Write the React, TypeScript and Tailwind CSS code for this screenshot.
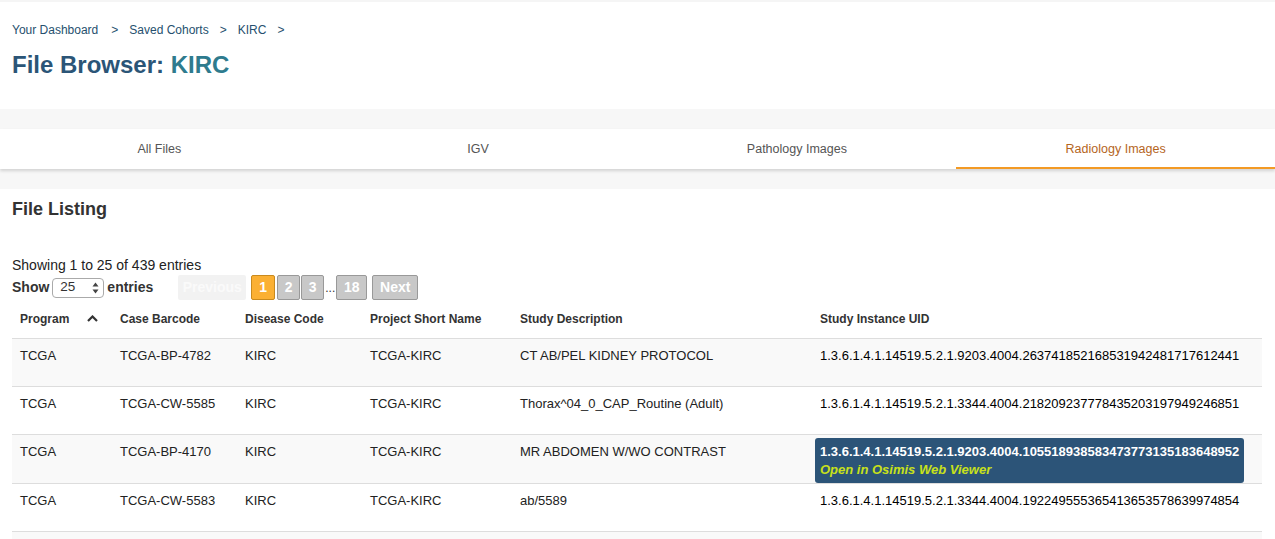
const rows = [
  { program: 'TCGA', barcode: 'TCGA-BP-4782', disease: 'KIRC', project: 'TCGA-KIRC', desc: 'CT AB/PEL KIDNEY PROTOCOL', uid: '1.3.6.1.4.1.14519.5.2.1.9203.4004.263741852168531942481717612441' },
  { program: 'TCGA', barcode: 'TCGA-CW-5585', disease: 'KIRC', project: 'TCGA-KIRC', desc: 'Thorax^04_0_CAP_Routine (Adult)', uid: '1.3.6.1.4.1.14519.5.2.1.3344.4004.218209237778435203197949246851' },
  { program: 'TCGA', barcode: 'TCGA-BP-4170', disease: 'KIRC', project: 'TCGA-KIRC', desc: 'MR ABDOMEN W/WO CONTRAST', uid: '1.3.6.1.4.1.14519.5.2.1.9203.4004.105518938583473773135183648952', hover: true },
  { program: 'TCGA', barcode: 'TCGA-CW-5583', disease: 'KIRC', project: 'TCGA-KIRC', desc: 'ab/5589', uid: '1.3.6.1.4.1.14519.5.2.1.3344.4004.192249555365413653578639974854' },
];

const tabs = ['All Files', 'IGV', 'Pathology Images', 'Radiology Images'];

export default function App() {
  return (
    <div className="min-h-[539px] bg-white font-['Liberation_Sans',Arial,sans-serif] text-[13px] text-[#333]">
      <div className="h-[2px] bg-[#f5f5f5]" />

      <div className="px-3 pt-[19px] h-[107px]">
        <div className="flex text-[12px] text-[#26506e]">
          <span>Your Dashboard</span>
          <span className="ml-[13px]">&gt;</span>
          <span className="ml-[11px]">Saved Cohorts</span>
          <span className="ml-[11px]">&gt;</span>
          <span className="ml-[11px]">KIRC</span>
          <span className="ml-[11px]">&gt;</span>
        </div>
        <h1 className="mt-[12px] text-[24px] font-bold text-[#2b5577] leading-7">
          File Browser: <span className="text-[#2e7b8e]">KIRC</span>
        </h1>
      </div>

      <div className="h-5 bg-[#f7f7f7]" />
      <div className="flex h-10 bg-white shadow-[0_2px_3px_rgba(0,0,0,0.15)] relative">
        {tabs.map((t, i) => (
          <div
            key={t}
            className={
              i === 3
                ? 'flex-1 flex items-center justify-center pt-[2px] text-[12.5px] text-[#b5651d] border-b-[2px] border-[#f39a24]'
                : 'flex-1 flex items-center justify-center text-[12.5px] text-[#555]'
            }
          >
            {t}
          </div>
        ))}
      </div>
      <div className="h-5 bg-[#f7f7f7]" />

      <div className="px-3">
        <h2 className="mt-[7px] text-[18px] font-bold text-[#333]">File Listing</h2>

        <div className="mt-[32px] text-[14px] text-[#222]">Showing 1 to 25 of 439 entries</div>
        <div className="flex items-center h-[25px] -mt-[1px]">
          <span className="font-bold text-[14px]">Show</span>
          <div className="ml-[3px] w-[52px] h-[20px] border border-[#aaa] rounded-[4px] flex items-center justify-between pl-[7px] pr-[4px] text-[13.5px] bg-white">
            <span>25</span>
            <svg width="7" height="12" viewBox="0 0 7 12">
              <path d="M3.5 0.5 L6.5 4.5 L0.5 4.5 Z" fill="#444" />
              <path d="M3.5 11.5 L6.5 7.5 L0.5 7.5 Z" fill="#444" />
            </svg>
          </div>
          <span className="ml-[3px] font-bold text-[14px]">entries</span>

          <div className="ml-[25px] flex items-center h-[25px] text-[14px] font-bold text-white">
            <div className="h-full w-[68px] flex items-center justify-center bg-[#f2f2f2] rounded-[2px] text-[#fafafa]">Previous</div>
            <div className="ml-[5px] h-full w-[24px] flex items-center justify-center bg-[#fbb033] border border-[#c98a1e] rounded-[2px]">1</div>
            <div className="ml-[2px] h-full w-[23px] flex items-center justify-center bg-[#c8c8c8] border border-[#999] rounded-[2px]">2</div>
            <div className="ml-[1px] h-full w-[23px] flex items-center justify-center bg-[#c8c8c8] border border-[#999] rounded-[2px]">3</div>
            <span className="mx-[1px] text-[#333] font-normal self-end text-[12px] pb-[3px]">...</span>
            <div className="h-full w-[31px] flex items-center justify-center bg-[#c8c8c8] border border-[#999] rounded-[2px]">18</div>
            <div className="ml-[5px] h-full w-[46px] flex items-center justify-center bg-[#c8c8c8] border border-[#999] rounded-[2px]">Next</div>
          </div>
        </div>

        <table className="w-[1250px] border-collapse table-fixed">
          <colgroup>
            <col className="w-[100px]" />
            <col className="w-[125px]" />
            <col className="w-[125px]" />
            <col className="w-[150px]" />
            <col className="w-[300px]" />
            <col className="w-[450px]" />
          </colgroup>
          <thead>
            <tr className="border-b border-[#ddd] h-[38px] text-[12px] font-bold text-[#333]">
              <th className="text-left px-2 align-middle">
                <div className="flex items-center justify-between pr-[6px]">
                  <span>Program</span>
                  <svg width="11" height="7" viewBox="0 0 11 7">
                    <path d="M1 6 L5.5 1.5 L10 6" stroke="#333" strokeWidth="2.2" fill="none" />
                  </svg>
                </div>
              </th>
              <th className="text-left px-2">Case Barcode</th>
              <th className="text-left px-2">Disease Code</th>
              <th className="text-left px-2">Project Short Name</th>
              <th className="text-left px-2">Study Description</th>
              <th className="text-left px-2">Study Instance UID</th>
            </tr>
          </thead>
          <tbody>
            {rows.map((r, i) => (
              <tr key={r.barcode} className={i % 2 === 0 ? 'h-[48px] bg-[#f9f9f9] border-b border-[#ddd]' : 'h-[48px] bg-white border-b border-[#ddd]'}>
                <td className="px-2 align-top pt-[7px] text-[#222]">{r.program}</td>
                <td className="px-2 align-top pt-[7px] text-[#222]">{r.barcode}</td>
                <td className="px-2 align-top pt-[7px] text-[#222]">{r.disease}</td>
                <td className="px-2 align-top pt-[7px] text-[#222]">{r.project}</td>
                <td className="px-2 align-top pt-[7px] text-[#222]">{r.desc}</td>
                <td className="align-top">
                  {r.hover ? (
                    <div className="ml-[3px] mt-[3px] w-[429px] h-[45px] bg-[#2c5478] rounded-[3px] px-[5px] pt-[5px] text-white font-bold leading-[18px] whitespace-nowrap">
                      <div className="text-[13px]">{r.uid}</div>
                      <div className="text-[#c8e11a] italic text-[13px]">Open in Osimis Web Viewer</div>
                    </div>
                  ) : (
                    <div className="px-2 pt-[7px] text-[13px] text-black whitespace-nowrap">{r.uid}</div>
                  )}
                </td>
              </tr>
            ))}
            <tr className="h-[48px] bg-[#f9f9f9]">
              <td colSpan={6} />
            </tr>
          </tbody>
        </table>
      </div>
    </div>
  );
}
